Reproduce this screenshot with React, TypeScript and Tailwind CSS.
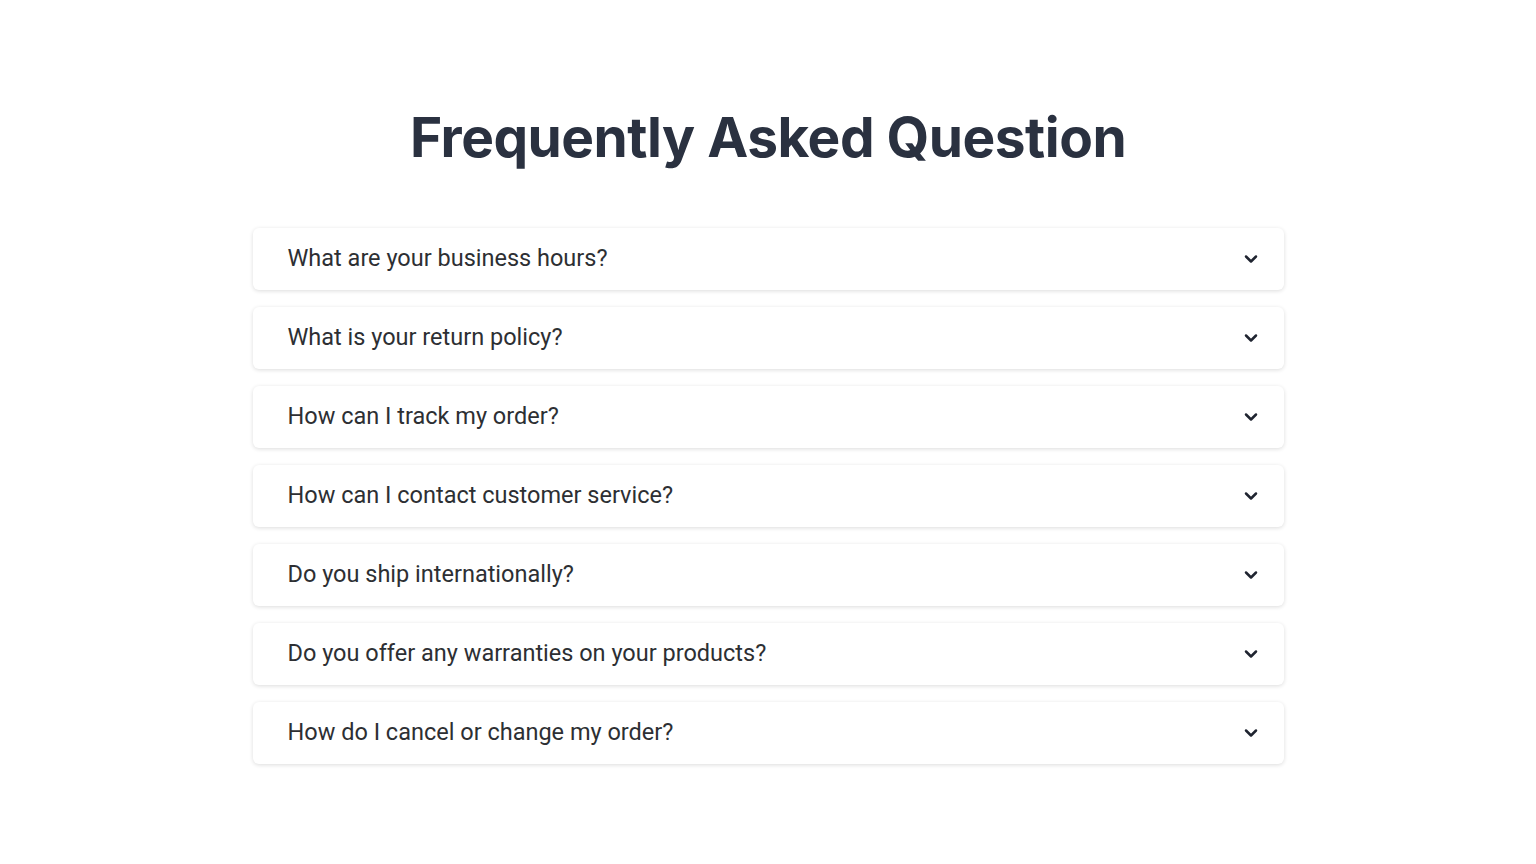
import React from "react";
import { ChevronDown } from "lucide-react";

const questions = [
  "What are your business hours?",
  "What is your return policy?",
  "How can I track my order?",
  "How can I contact customer service?",
  "Do you ship internationally?",
  "Do you offer any warranties on your products?",
  "How do I cancel or change my order?",
];

const FaqItem = ({ question }: { question: string }) => (
  <div className="flex h-[62px] items-center justify-between rounded-md bg-white pl-[35px] pr-[23px] shadow-[0_1px_4px_rgba(0,0,0,0.14)]">
    <span className="text-[23.5px] text-[#2d2f33] [font-family:Roboto,sans-serif]">{question}</span>
    <ChevronDown className="h-[20px] w-[20px] text-[#1f2430]" strokeWidth={3} />
  </div>
);

const App = () => {
  return (
    <div className="min-h-screen bg-white">
      <div className="mx-auto w-[1031px] pt-[102px]">
        <h1 className="text-center text-[55px] font-bold leading-[70px] tracking-[-0.5px] text-[#2a3140] [font-family:Inter,sans-serif]">
          Frequently Asked Question
        </h1>
        <div className="mt-[56px] flex flex-col gap-[17px]">
          {questions.map((q) => (
            <FaqItem key={q} question={q} />
          ))}
        </div>
      </div>
    </div>
  );
};

export default App;
